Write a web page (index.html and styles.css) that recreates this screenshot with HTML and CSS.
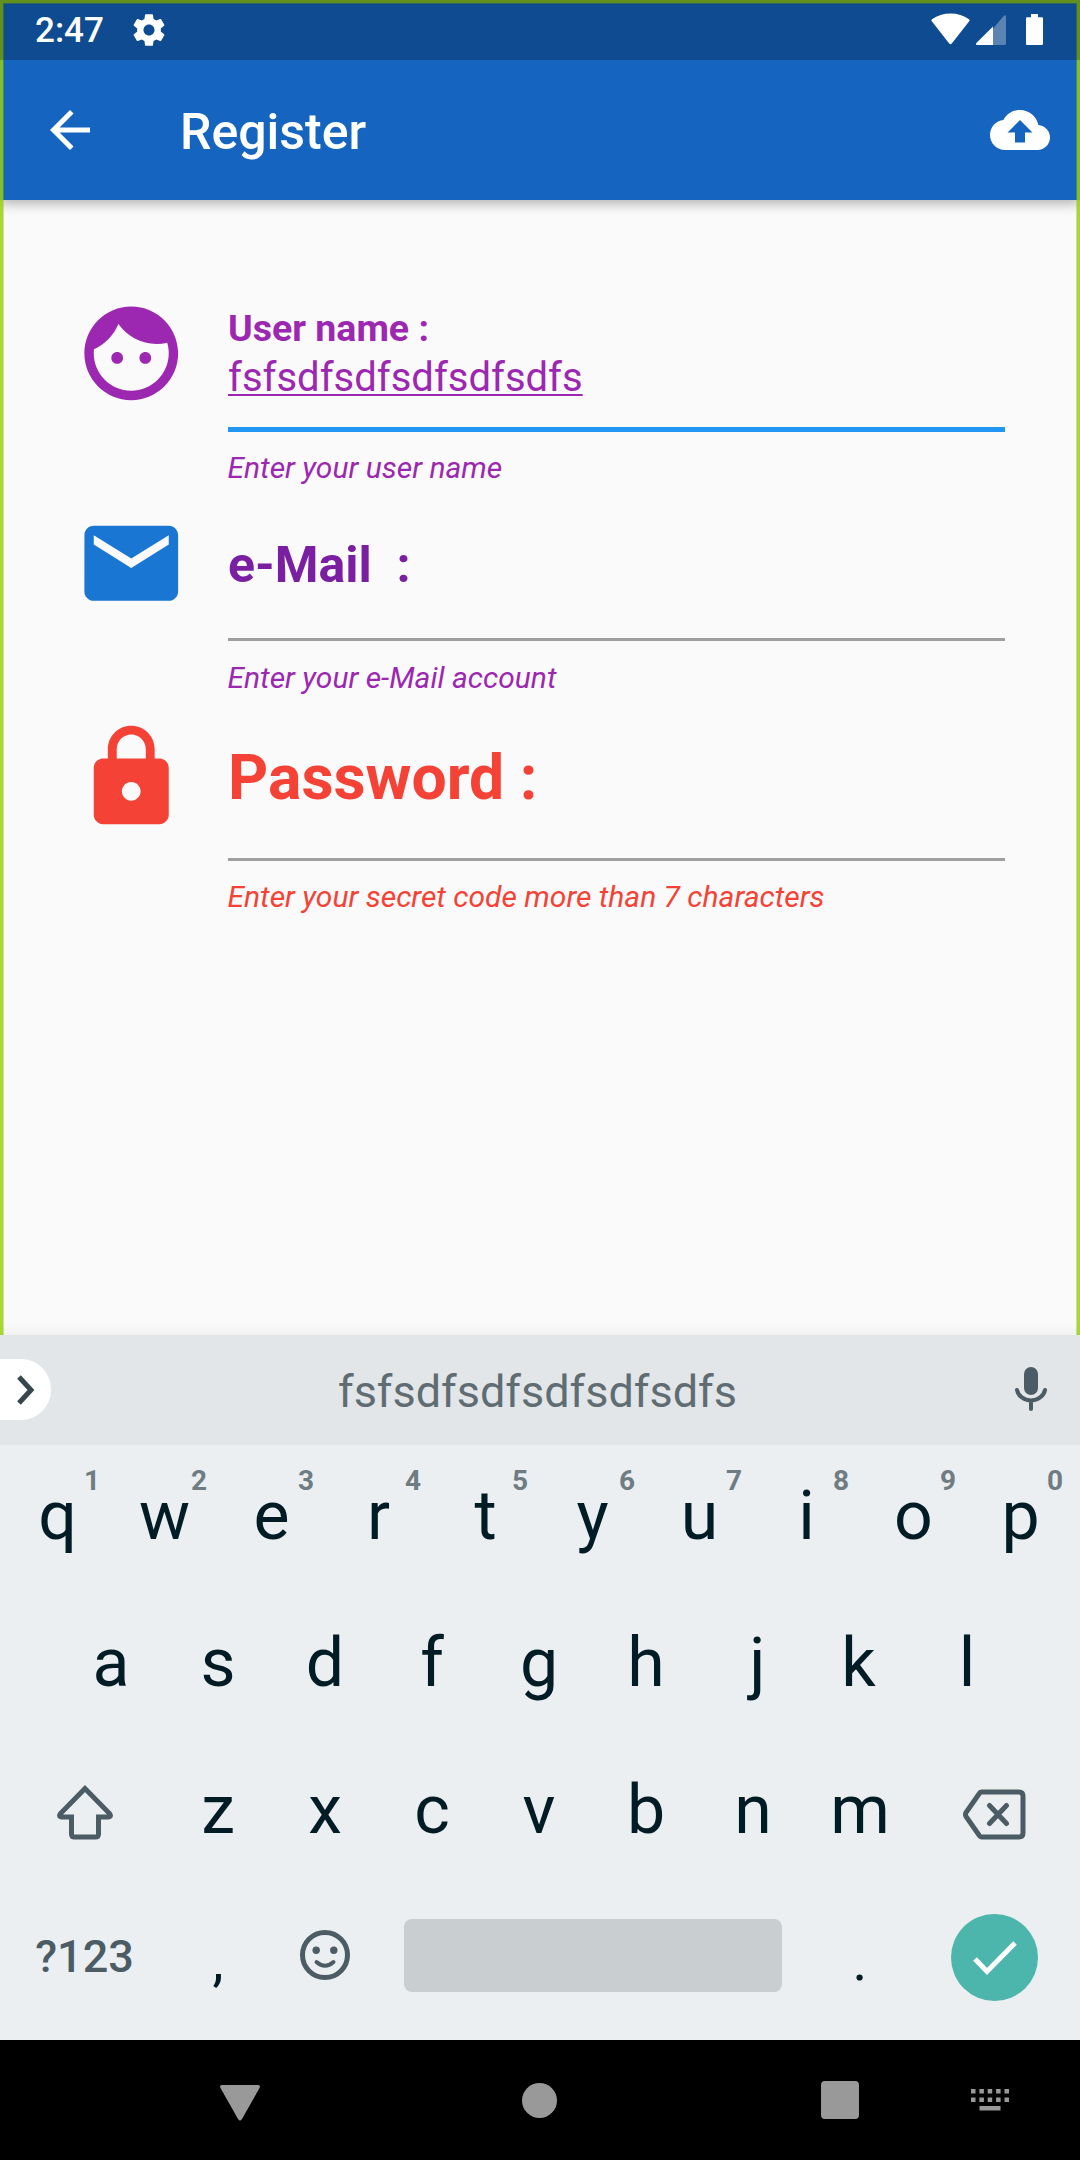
FILE: index.html
```html
<!DOCTYPE html>
<html lang="en">
<head>
<meta charset="utf-8">
<title>Register</title>
<link rel="stylesheet" href="styles.css">
</head>
<body>
<div class="phone">
  <main class="screen">
    <header class="appbar">
      <svg class="icon back" viewBox="0 0 24 24"><path d="M20 11H7.83l5.59-5.59L12 4l-8 8 8 8 1.41-1.41L7.83 13H20v-2z"/></svg>
      <h1 class="title">Register</h1>
      <svg class="icon" viewBox="0 0 24 24"><path d="M19.35 10.04C18.67 6.59 15.64 4 12 4 9.11 4 6.6 5.64 5.35 8.04 2.34 8.36 0 10.91 0 14c0 3.31 2.69 6 6 6h13c2.76 0 5-2.24 5-5 0-2.64-2.05-4.78-4.65-4.96zM14 13v4h-4v-4H7l5-5 5 5h-3z"/></svg>
    </header>
    <form class="form">
      <div class="field user">
        <svg class="field-icon" viewBox="0 0 24 24"><path d="M9 11.75c-.69 0-1.25.56-1.25 1.25s.56 1.25 1.25 1.25 1.25-.56 1.25-1.25-.56-1.25-1.25-1.25zm6 0c-.69 0-1.25.56-1.25 1.25s.56 1.25 1.25 1.25 1.25-.56 1.25-1.25-.56-1.25-1.25-1.25zM12 2C6.48 2 2 6.48 2 12s4.480 10 10 10 10-4.480 10-10S17.520 2 12 2zm0 18c-4.410 0-8-3.590-8-8 0-.29.02-.58.05-.86 2.360-1.050 4.230-2.980 5.210-5.370C11.070 8.330 14.050 10 17.420 10c.78 0 1.530-.09 2.250-.26.21.71.33 1.470.33 2.260 0 4.410-3.590 8-8 8z"/></svg>
        <div class="field-body">
          <div class="label">User name :</div>
          <div class="value"><span class="composing">fsfsdfsdfsdfsdfsdfs</span></div>
          <div class="rule"></div>
          <div class="helper">Enter your user name</div>
        </div>
      </div>
      <div class="field email">
        <svg class="field-icon" viewBox="0 0 24 24"><path d="M20 4H4c-1.100 0-1.990.9-1.990 2L2 18c0 1.100.9 2 2 2h16c1.100 0 2-.9 2-2V6c0-1.100-.9-2-2-2zm0 4l-8 5-8-5V6l8 5 8-5v2z"/></svg>
        <div class="field-body">
          <div class="label">e-Mail&nbsp; :</div>
          <div class="rule"></div>
          <div class="helper">Enter your e-Mail account</div>
        </div>
      </div>
      <div class="field password">
        <svg class="field-icon" viewBox="0 0 24 24"><path d="M18 8h-1V6c0-2.760-2.240-5-5-5S7 3.240 7 6v2H6c-1.100 0-2 .9-2 2v10c0 1.100.9 2 2 2h12c1.100 0 2-.9 2-2V10c0-1.100-.9-2-2-2zm-6 9c-1.100 0-2-.9-2-2s.9-2 2-2 2 .9 2 2-.9 2-2 2zm3.100-9H8.900V6c0-1.710 1.390-3.100 3.100-3.100 1.710 0 3.100 1.390 3.100 3.100v2z"/></svg>
        <div class="field-body">
          <div class="label">Password :</div>
          <div class="rule"></div>
          <div class="helper">Enter your secret code more than 7 characters</div>
        </div>
      </div>
    </form>
    <div class="frame"></div>
    <div class="statusbar">
      <span class="clock">2:47</span>
      <svg class="gear" viewBox="0 0 24 24"><path d="M19.430 12.980c.04-.32.07-.64.07-.98s-.03-.66-.07-.98l2.110-1.650c.19-.15.24-.42.12-.64l-2-3.460c-.12-.22-.39-.3-.61-.22l-2.490 1c-.52-.4-1.080-.73-1.690-.98l-.38-2.650C14.460 2.180 14.250 2 14 2h-4c-.25 0-.46.18-.49.42l-.38 2.650c-.61.25-1.170.59-1.690.98l-2.490-1c-.23-.09-.49 0-.61.22l-2 3.460c-.13.22-.07.49.12.64l2.110 1.650c-.04.32-.07.65-.07.98s.03.66.07.98l-2.110 1.650c-.19.15-.24.42-.12.64l2 3.460c.12.22.39.3.61.22l2.490-1c.52.4 1.080.73 1.690.98l.38 2.650c.03.24.24.42.49.42h4c.25 0 .46-.18.49-.42l.38-2.650c.61-.25 1.170-.59 1.690-.98l2.490 1c.23.09.49 0 .61-.22l2-3.460c.12-.22.07-.49-.12-.64l-2.110-1.650zM12 15.500c-1.930 0-3.500-1.570-3.500-3.500s1.570-3.500 3.500-3.500 3.500 1.570 3.500 3.500-1.570 3.500-3.500 3.500z"/></svg>
      <svg class="indicators" viewBox="0 0 114 34">
        <path d="M2 8.500Q.6 7.200 2 6.200Q10 .5 20.500.5T39 6.200Q40.400 7.200 39 8.500L21.800 30.500Q20.500 32 19.200 30.500Z"/>
        <path opacity=".32" d="M63 15.500 73.500 3.200Q76 1 76 3.500V30.500Q76 32 74.500 32H63Z"/>
        <path d="M63 13.500V32H47.200Q45 32 46.600 29.800Z"/>
        <path d="M101 1h7v3.300h4q1 0 1 1V31q0 1-1 1H97q-1 0-1-1V5.300q0-1 1-1h4z"/>
      </svg>
    </div>
  </main>

  <section class="keyboard">
    <div class="strip">
      <div class="toggle"><svg viewBox="0 0 20 32"><path d="M3 3l12 13L3 29"/></svg></div>
      <span class="suggestion">fsfsdfsdfsdfsdfsdfs</span>
      <svg class="mic" viewBox="0 0 32 44"><rect x="9" width="14" height="28" rx="7"/><path d="M2 23a14.200 12.500 0 0 0 28 0M16 36v6"/></svg>
    </div>
    <div class="row">
      <div class="key">q<sup>1</sup></div><div class="key">w<sup>2</sup></div><div class="key">e<sup>3</sup></div><div class="key">r<sup>4</sup></div><div class="key">t<sup>5</sup></div><div class="key">y<sup>6</sup></div><div class="key">u<sup>7</sup></div><div class="key">i<sup>8</sup></div><div class="key">o<sup>9</sup></div><div class="key">p<sup>0</sup></div>
    </div>
    <div class="row">
      <div class="key">a</div><div class="key">s</div><div class="key">d</div><div class="key">f</div><div class="key">g</div><div class="key">h</div><div class="key key-j">j</div><div class="key key-k">k</div><div class="key">l</div>
    </div>
    <div class="row">
      <div class="key wide"><svg class="shift" viewBox="0 0 58 58"><path d="M29 4.500 4.500 29.500Q2 33 6 33H15.500V50Q15.500 53 18.500 53H39.500Q42.500 53 42.500 50V33H52Q56 33 53.500 29.500Z"/></svg></div>
      <div class="key">z</div><div class="key">x</div><div class="key">c</div><div class="key">v</div><div class="key">b</div><div class="key">n</div><div class="key">m</div>
      <div class="key wide"><svg class="delete" viewBox="0 0 64 52"><path d="M20 3H57Q61 3 61 7V44Q61 48 57 48H20Q18 48 17 46L4 27.500Q3 25.500 4 23.500L17 5Q18 3 20 3ZM27.500 16.500l17 18M44.500 16.500l-17 18"/></svg></div>
    </div>
    <div class="row">
      <div class="key wide mode">?123</div>
      <div class="key punct">,</div>
      <div class="key"><svg class="smile" viewBox="0 0 50 50"><circle class="line" cx="25" cy="25" r="22.500"/><circle cx="16.200" cy="20.300" r="3.700"/><circle cx="33.800" cy="20.300" r="3.700"/><path class="line mouth" d="M16.500 32q8.500 7.500 17 0"/></svg></div>
      <div class="key space"><span></span></div>
      <div class="key punct">.</div>
      <div class="key wide"><span class="enter"><svg viewBox="0 0 44 34"><path d="M2 18 14 30.500 42 2"/></svg></span></div>
    </div>
  </section>

  <nav class="navbar">
    <svg class="nav-back" viewBox="0 0 40 36"><path d="M2.500 0H37.500Q41 0 39.500 3L22 34Q20 37 18 34L.5 3Q-1 0 2.500 0Z"/></svg>
    <span class="nav-home"></span>
    <span class="nav-recent"></span>
    <svg class="nav-ime" viewBox="0 0 38 22"><path d="M0 0h4.500v4.500H0zM8.400 0h4.500v4.500H8.400zM16.700 0h4.500v4.500h-4.500zM25.100 0h4.500v4.500h-4.500zM33.500 0H38v4.500h-4.500zM0 8.500h4.500V13H0zM8.400 8.500h4.500V13H8.400zM16.700 8.500h4.500V13h-4.500zM25.100 8.500h4.500V13h-4.500zM33.500 8.500H38V13h-4.500zM8.500 17h21v4.500h-21z"/></svg>
  </nav>
</div>
</body>
</html>
```
FILE: styles.css
```css
* { box-sizing: border-box; }
body { margin: 0; font-family: Roboto, "Liberation Sans", sans-serif; }
svg { display: block; flex: none; overflow: visible; }

.phone {
  width: 1080px;
  height: 2160px;
  display: flex;
  flex-direction: column;
  overflow: hidden;
  background: #000;
}

/* App */
.screen {
  position: relative;
  height: 1335px;
  background: linear-gradient(transparent 1323px, rgba(0, 0, 0, .035) 1335px), #fafafa;
}
.frame {
  position: absolute;
  inset: 0;
  border: 3px solid rgba(152, 210, 10, .84);
  border-bottom: 0;
  box-shadow: inset 1px 1px rgba(130, 190, 20, .4), inset -1px 0 rgba(130, 190, 20, .4);
}
.statusbar {
  position: absolute;
  inset: 0 0 auto;
  height: 60px;
  padding: 0 36px 0 35px;
  display: flex;
  align-items: center;
  background: rgba(0, 0, 0, .25);
  color: #fff;
  fill: #fff;
}
.clock { font-size: 35px; font-weight: 500; line-height: 62px; width: 95px; padding-top: 1px; }
.gear { width: 38px; height: 38px; }
.indicators { width: 114px; height: 34px; margin: 0 0 0 auto; }

.appbar {
  height: 200px;
  padding: 60px 30px 0 40px;
  display: flex;
  align-items: center;
  background: #1565c0;
  color: #fff;
  fill: #fff;
  box-shadow: 0 3px 12px rgba(0, 0, 0, .32);
}
.icon { width: 60px; height: 60px; }
.title {
  flex: 1;
  margin: 0 0 0 80px;
  padding-top: 4px;
  font-size: 50px;
  font-weight: 500;
  line-height: 60px;
}

.form { padding: 96px 75px 0; }
.field { display: flex; gap: 40px; }
.field-icon { width: 112.5px; height: 112.5px; margin-top: .6px; fill: currentColor; }
.field-body { flex: 1; }
.label { font-weight: 700; white-space: nowrap; padding-left: .5px; }
.value { font-size: 40px; line-height: 50px; margin-top: 5px; padding-left: .5px; }
.composing { text-decoration: underline; text-decoration-thickness: 2px; text-underline-offset: 3px; text-decoration-skip-ink: none; }
.rule { height: 3px; background: #9e9e9e; }
.helper { font-size: 30px; font-style: italic; line-height: 36px; margin-top: 18px; color: #9c27b0; }

.user { color: #9c27b0; height: 210px; }
.user .label { font-size: 37.5px; line-height: 40px; padding-top: 12px; }
.user .rule { height: 5px; margin-top: 24px; background: #2196f3; }

.email { height: 214px; color: #1976d2; }
.email .label { font-size: 50px; line-height: 60px; padding-top: 29px; color: #7b1fa2; }
.email .rule { margin-top: 43px; }
.email .helper { margin-top: 19px; }

.password { color: #f44336; }
.password .label { font-size: 62.5px; line-height: 80px; padding-top: 18px; }
.password .rule { margin-top: 40px; }
.password .helper { color: #f44336; }

/* Keyboard */
.keyboard { height: 705px; background: #ebeff2; color: #021c26; }
.strip {
  height: 110px;
  display: flex;
  align-items: center;
  padding-right: 33px;
  background: #e2e6e9;
}
.toggle {
  width: 51px;
  height: 61px;
  margin-bottom: 1px;
  padding-left: 16px;
  display: flex;
  align-items: center;
  border-radius: 0 30px 30px 0;
  background: #fff;
}
.toggle svg { width: 20px; height: 32px; fill: none; stroke: #37474f; stroke-width: 5; }
.suggestion { font-size: 45px; line-height: 60px; margin-left: 287px; padding-top: 3px; color: #5f6d73; }
.mic { width: 32px; height: 44px; margin: 0 0 2px auto; fill: #4b5c64; }
.mic path { fill: none; stroke: #4b5c64; stroke-width: 4; stroke-linecap: round; }

.row { height: 147px; display: flex; justify-content: center; padding-right: 2px; }
.key {
  position: relative;
  flex: none;
  width: 107px;
  height: 147px;
  display: flex;
  justify-content: center;
  font-size: 68px;
  line-height: 142px;
}
.key svg { align-self: center; }
.key sup {
  position: absolute;
  left: 72px;
  width: 32px;
  top: 20px;
  text-align: center;
  font-size: 28px;
  font-weight: 700;
  line-height: 32px;
  color: #6f7c82;
}
.key-j { padding-left: 9px; }
.key-k { padding-right: 3px; }
.wide { width: 160px; }
.shift { width: 58px; height: 58px; fill: none; stroke: #4b5c64; stroke-width: 5; }
.delete { width: 64px; height: 52px; margin-top: 4px; fill: none; stroke: #4b5c64; stroke-width: 5; stroke-linecap: round; }
.mode { font-size: 45px; font-weight: 500; line-height: 141px; color: #4b5c64; }
.punct { font-size: 56px; line-height: 150px; }
.smile { width: 50px; height: 50px; margin-bottom: 9px; fill: #4b5c64; }
.smile .line { fill: none; stroke: #4b5c64; stroke-width: 5; stroke-linecap: round; }
.smile .mouth { stroke-width: 4; }
.space { width: 428px; align-items: center; }
.space span { width: 378px; height: 73px; margin-bottom: 8px; border-radius: 8px; background: #c9ced1; }
.enter {
  align-self: center;
  width: 87px;
  height: 87px;
  margin: 0 0 4px 2px;
  display: flex;
  align-items: center;
  justify-content: center;
  border-radius: 50%;
  background: #4db6ac;
}
.enter svg { width: 44px; height: 34px; fill: none; stroke: #fff; stroke-width: 5; }

/* System navigation */
.navbar { height: 120px; display: flex; align-items: center; padding-left: 220px; fill: #999; }
.nav-back { width: 40px; height: 36px; margin-top: 6px; }
.nav-home { width: 35px; height: 35px; margin-left: 262px; border-radius: 50%; background: #999; }
.nav-recent { width: 38px; height: 38px; margin-left: 264px; border-radius: 4px; background: #999; }
.nav-ime { width: 38px; height: 22px; margin-left: 112px; }
```
